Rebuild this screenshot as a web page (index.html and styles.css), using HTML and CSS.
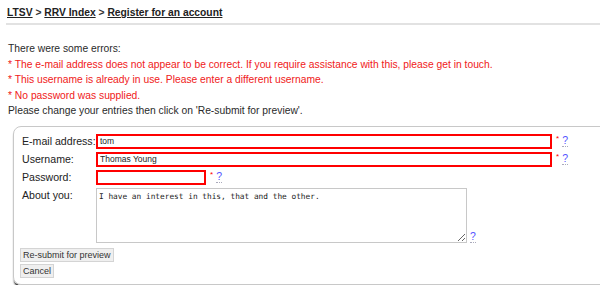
FILE: index.html
```html
<!DOCTYPE html>
<html lang="en">
<head>
<meta charset="utf-8">
<title>Register for an account</title>
<link rel="stylesheet" href="styles.css">
</head>
<body>
<nav class="crumbs"><a href="#">LTSV</a> &gt; <a href="#">RRV Index</a> &gt; <a href="#">Register for an account</a></nav>
<hr class="rule">
<div class="errors">
  <p>There were some errors:</p>
  <p class="err">* The e-mail address does not appear to be correct. If you require assistance with this, please get in touch.</p>
  <p class="err">* This username is already in use. Please enter a different username.</p>
  <p class="err">* No password was supplied.</p>
  <p>Please change your entries then click on 'Re-submit for preview'.</p>
</div>
<form class="panel">
  <div class="grid">
    <label class="lbl">E-mail address:</label>
    <div class="field"><input class="inp wide bad" type="text" value="tom"><span class="req">*</span><abbr class="help" title="help">?</abbr></div>
    <label class="lbl">Username:</label>
    <div class="field"><input class="inp wide bad" type="text" value="Thomas Young"><span class="req">*</span><abbr class="help" title="help">?</abbr></div>
    <label class="lbl">Password:</label>
    <div class="field"><input class="inp short bad" type="password"><span class="req">*</span><abbr class="help" title="help">?</abbr></div>
    <label class="lbl top">About you:</label>
    <div class="field end"><textarea class="area">I have an interest in this, that and the other.</textarea><abbr class="help" title="help">?</abbr></div>
  </div>
  <div class="buttons">
    <button type="button" class="btn">Re-submit for preview</button>
    <button type="button" class="btn">Cancel</button>
  </div>
</form>
</body>
</html>
```
FILE: styles.css
```css
html, body { overflow-x: hidden; }
body {
  margin: 0;
  font-family: "Liberation Sans", Arial, sans-serif;
  color: #222;
  background: #fff;
}
.crumbs {
  padding: 5px 7px 0;
  height: 15px;
  font-size: 10.3px;
  font-weight: bold;
  line-height: 15px;
  color: #333;
}
.crumbs a { color: #222; text-decoration: underline; }
.rule {
  margin: 3px 0 0 6px;
  border: 0;
  border-top: 2px solid #e2e2e2;
  height: 0;
}
.errors {
  margin-top: 16px;
  padding-left: 8px;
  font-size: 10.3px;
  line-height: 15.5px;
  color: #2a2a2a;
}
.errors p { margin: 0; }
.errors .err { color: #f02020; }
.panel {
  margin: 7px -60px 0 13px;
  border: 1px solid #c8c8c8;
  border-radius: 8px;
  box-shadow: 1px 3px 2px #1a1a1a;
  padding: 7px 8px 6px 8px;
}
.grid {
  display: grid;
  grid-template-columns: 74px 1fr;
  row-gap: 3px;
}
.lbl {
  font-size: 10.6px;
  line-height: 15px;
  color: #222;
  white-space: nowrap;
}
.field {
  display: flex;
  align-items: center;
}
.field.end { align-items: flex-end; }
.inp {
  box-sizing: border-box;
  height: 15px;
  margin: 0;
  padding: 0 2px;
  border: 2px solid #f00;
  font-family: "Liberation Sans", Arial, sans-serif;
  font-size: 8.5px;
  color: #222;
  background: #fff;
  outline: none;
}
.wide { width: 456px; }
.short { width: 110px; }
.req {
  color: #f00;
  font-size: 8px;
  margin-left: 4px;
  align-self: flex-start;
  line-height: 10px;
}
.help {
  color: #5555ff;
  font-size: 10.5px;
  line-height: 11px;
  margin-left: 3px;
  text-decoration: none;
  border-bottom: 1px dotted #aab;
}
.area {
  box-sizing: border-box;
  width: 371px;
  height: 55px;
  margin: 0;
  padding: 3px 2px 1px;
  border: 1px solid #c8c8c8;
  font-family: "DejaVu Sans Mono", "Liberation Mono", monospace;
  font-size: 7.8px;
  line-height: 10px;
  color: #222;
  resize: both;
}
.buttons {
  margin-top: 5px;
  display: flex;
  flex-direction: column;
  align-items: flex-start;
  gap: 2px;
}
.btn {
  margin: 0 0 0 -2px;
  height: 14px;
  padding: 0 2px;
  border: 1px solid #d4d4d4;
  background: #efefef;
  font-family: "Liberation Sans", Arial, sans-serif;
  font-size: 9px;
  line-height: 12px;
  color: #333;
}
```
